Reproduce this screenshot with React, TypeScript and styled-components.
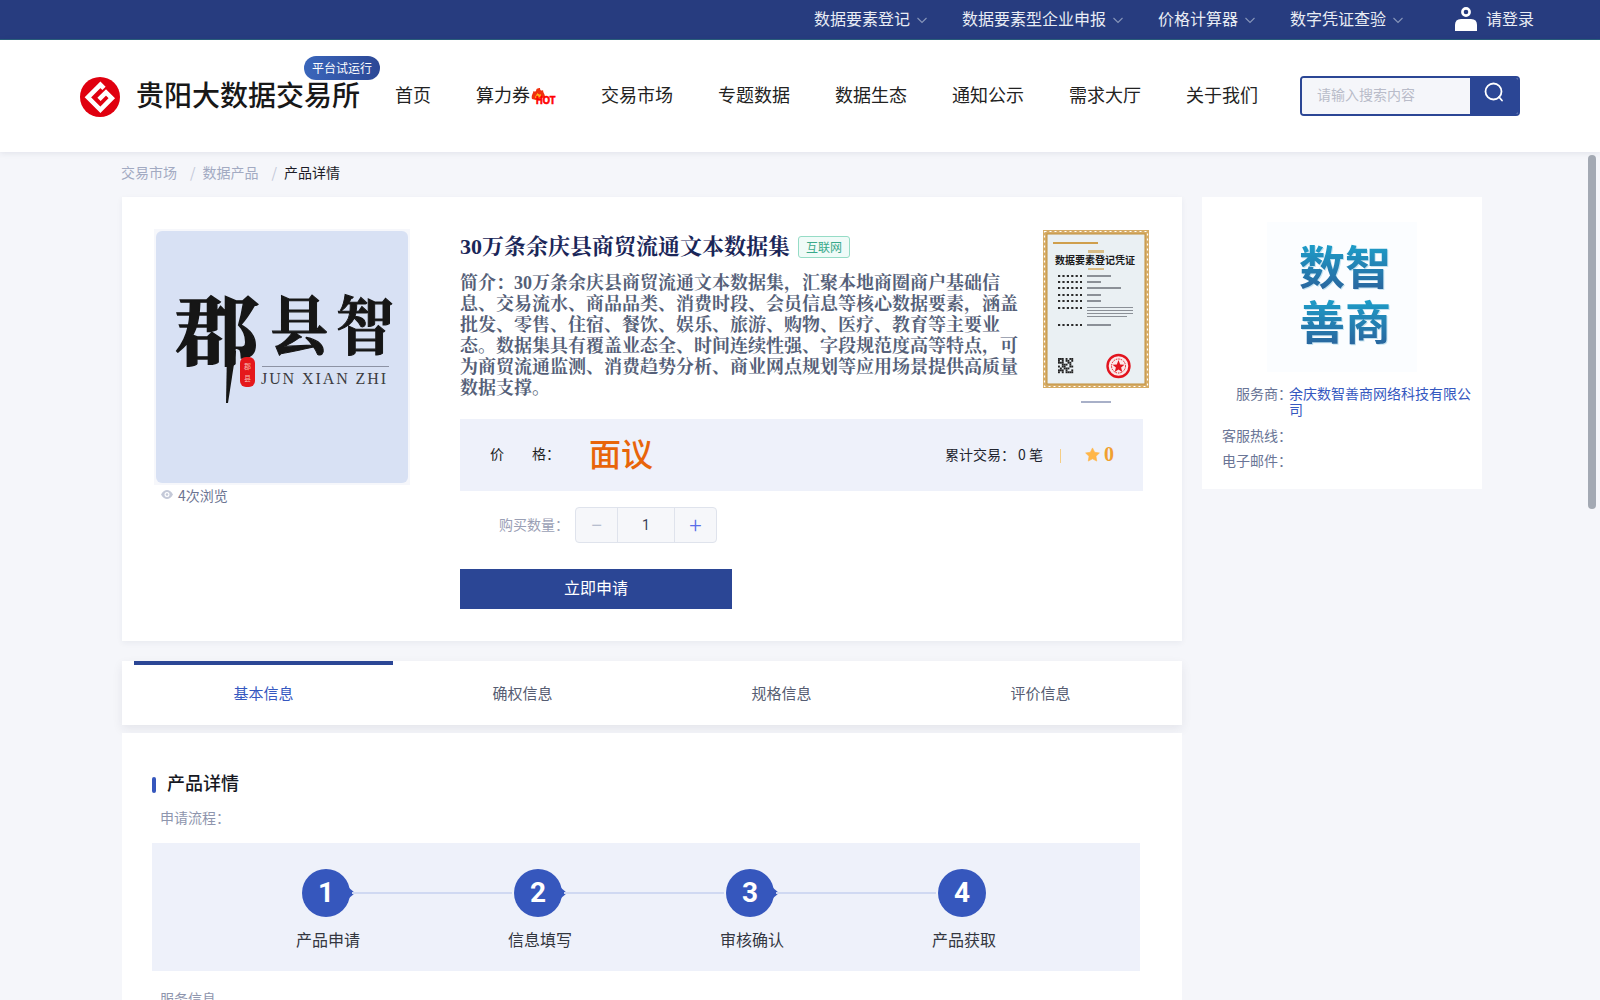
import * as React from "react"
import styled, { createGlobalStyle } from "styled-components"

const sans = `"Noto Sans CJK SC", "Liberation Sans", sans-serif`
const serif = `"Liberation Serif", "Noto Serif CJK SC", "Noto Sans CJK SC", serif`

// full width colon and comma, the page text uses these
const COLON = "\uFF1A"
const COMMA = "\uFF0C"

const GlobalStyle = createGlobalStyle`
  html, body {
    margin: 0;
    height: 1000px;
    overflow: hidden;
    background: #f5f6fa;
    font-family: ${sans};
    color: #222;
  }
  * { box-sizing: border-box; }
`

const TopBar = styled.div`
  height: 40px;
  background: #273c7f;
  border-bottom: 1px solid #2a5f7c;
  display: flex;
  align-items: center;
  justify-content: flex-end;
  padding: 0 66px 3px 0;
  color: #e9ecf4;
  font-size: 16px;
`

const TopItem = styled.div`
  display: flex;
  align-items: center;
  gap: 6px;
  margin-right: 34px;
  &:nth-child(4) { margin-right: 51px; }
  svg { margin-top: 4px; }
`

const LoginBox = styled.div`
  display: flex;
  align-items: center;
  gap: 9px;
  svg { margin-top: 2px; }
`

const Header = styled.div`
  height: 112px;
  background: #fff;
  box-shadow: 0 1px 6px rgba(40, 50, 90, 0.1);
  display: flex;
  align-items: center;
  padding: 0 80px;
  position: relative;
`

const Brand = styled.div`
  position: relative;
  display: flex;
  align-items: center;
  gap: 16px;
  margin-right: 35px;
  svg { margin-top: 2px; }
`

const BrandName = styled.div`
  font-size: 28px;
  font-weight: 500;
  color: #181818;
  white-space: nowrap;
  margin-bottom: 4px;
`

const TrialBadge = styled.div`
  position: absolute;
  left: 224px;
  top: -18px;
  width: 76px;
  height: 24px;
  border-radius: 12px;
  background: linear-gradient(90deg, #3a66bb, #2c4896);
  color: #fff;
  font-size: 12px;
  line-height: 23px;
  text-align: center;
`

const Nav = styled.div`
  display: flex;
  gap: 45px;
  margin-bottom: 4px;
  font-size: 18px;
  color: #222;
  white-space: nowrap;
`

const NavItem = styled.div`
  display: flex;
  align-items: center;
  height: 26px;
`

const SearchBox = styled.div`
  width: 220px;
  height: 40px;
  margin-left: 42px;
  border: 2px solid #2b4695;
  border-radius: 4px;
  display: flex;
  overflow: hidden;
`

const SearchInput = styled.div`
  flex: 1;
  background: #f5f6fa;
  padding-left: 15px;
  color: #b9bcc9;
  font-size: 14px;
  line-height: 33px;
`

const SearchButton = styled.div`
  width: 48px;
  background: #2b4695;
  display: flex;
  align-items: flex-start;
  justify-content: center;
  padding-top: 4px;
`

const Crumbs = styled.div`
  height: 45px;
  padding: 10px 0 0 121px;
  font-size: 14px;
  line-height: 20px;
  color: #a2aac2;
  display: flex;
`

const CrumbSep = styled.span`
  margin: 0 7px 0 13px;
  color: #c3c8d8;
`

const CrumbNow = styled.span`
  color: #1c1c28;
`

const Main = styled.div`
  display: flex;
  gap: 20px;
  padding-left: 122px;
  align-items: flex-start;
`

const LeftColumn = styled.div`
  width: 1060px;
`

const ProductCard = styled.div`
  height: 444px;
  background: #fff;
  box-shadow: 0 2px 6px rgba(40, 50, 90, 0.06);
  padding: 32px 39px 32px 32px;
  display: flex;
  gap: 50px;
`

const CoverColumn = styled.div`
  width: 256px;
  flex: none;
`

const CoverFrame = styled.div`
  width: 256px;
  height: 256px;
  border: 2px solid #f6f7fb;
  background: #f6f7fb;
`

const Views = styled.div`
  display: flex;
  align-items: center;
  gap: 5px;
  padding-left: 7px;
  height: 19px;
  font-size: 14px;
  color: #6c7492;
`

const InfoColumn = styled.div`
  flex: 1;
  min-width: 0;
`

const InfoTop = styled.div`
  display: flex;
  gap: 23px;
  height: 190px;
  margin-right: -6px;
`

const InfoText = styled.div`
  width: 560px;
  flex: none;
`

const TitleRow = styled.div`
  display: flex;
  align-items: center;
  height: 36px;
  margin-bottom: 8px;
  gap: 8px;
`

const Title = styled.h1`
  margin: 0 0 6px;
  font-family: ${serif};
  font-size: 22px;
  font-weight: 700;
  color: #1a2658;
  white-space: nowrap;
`

const Tag = styled.span`
  width: 52px;
  height: 22px;
  border: 1px solid #96dcc6;
  border-radius: 3px;
  background: #f0fbf8;
  color: #38a98a;
  font-size: 12px;
  line-height: 20px;
  text-align: center;
`

const Intro = styled.p`
  margin: 0;
  font-family: ${serif};
  font-size: 18px;
  line-height: 21px;
  font-weight: 700;
  color: #555f78;
`

const CertColumn = styled.div`
  width: 106px;
  flex: none;
  padding-top: 1px;
`

const CertDot = styled.div`
  width: 30px;
  height: 2px;
  margin: 13px auto 0;
  background: #a8b0c8;
`

const PriceBar = styled.div`
  height: 72px;
  background: #eef1fa;
  display: flex;
  align-items: center;
  padding: 0 29px 4px 30px;
  font-size: 14px;
`

const PriceLabel = styled.div`
  width: 70px;
  display: flex;
  justify-content: space-between;
  color: #222;
`

const PriceValue = styled.span`
  margin: 0 0 3px 29px;
  font-size: 32px;
  font-weight: 500;
  color: #e8650a;
`

const PriceStats = styled.div`
  margin: 2px 0 0 auto;
  display: flex;
  align-items: center;
  white-space: pre;
  color: #22242e;
`

const StatDivider = styled.span`
  width: 1px;
  height: 14px;
  margin: 3px 24px 0 17px;
  background: #f5cd84;
`

const Score = styled.span`
  display: flex;
  align-items: center;
  gap: 4px;
  font-family: ${serif};
  font-size: 20px;
  font-weight: 700;
  color: #f0a030;
`

const QuantityRow = styled.div`
  display: flex;
  align-items: center;
  margin-top: 16px;
`

const QuantityLabel = styled.span`
  width: 115px;
  padding-right: 6px;
  margin-bottom: 2px;
  text-align: right;
  font-size: 14px;
  color: #9aa0b5;
`

const Stepper = styled.div`
  width: 142px;
  height: 36px;
  border: 1px solid #dfe3ec;
  border-radius: 4px;
  background: #f6f7fa;
  display: grid;
  grid-template-columns: 41px 1fr 41px;
`

const StepCell = styled.div<{ $tone?: string; $mid?: boolean }>`
  display: flex;
  align-items: center;
  justify-content: center;
  font-family: "Roboto", sans-serif;
  font-size: ${(p) => (p.$mid ? "14px" : "22px")};
  font-weight: ${(p) => (p.$mid ? 400 : 300)};
  color: ${(p) => p.$tone || "#3a4058"};
  ${(p) => p.$mid && "border-left: 1px solid #dfe3ec; border-right: 1px solid #dfe3ec;"}
`

const ApplyButton = styled.button`
  display: block;
  width: 272px;
  height: 40px;
  margin-top: 26px;
  padding: 0 0 4px;
  border: 0;
  background: #2b4695;
  color: #fff;
  font-family: ${sans};
  font-size: 16px;
`

const Tabs = styled.div`
  height: 64px;
  margin-top: 20px;
  padding: 0 12px;
  background: #fff;
  box-shadow: 0 4px 10px rgba(40, 40, 60, 0.08);
  display: grid;
  grid-template-columns: repeat(4, 259px);
`

const Tab = styled.div<{ $active?: boolean }>`
  border-top: 4px solid ${(p) => (p.$active ? "#2b4695" : "transparent")};
  padding-top: 17px;
  text-align: center;
  font-size: 15px;
  line-height: 22px;
  color: ${(p) => (p.$active ? "#3558c0" : "#565d72")};
`

const DetailCard = styled.div`
  margin-top: 8px;
  height: 300px;
  background: #fff;
  padding: 44px 42px 0 30px;
`

const SectionHead = styled.div`
  display: flex;
  align-items: center;
  gap: 11px;
  height: 16px;
  &::before {
    content: "";
    width: 4px;
    height: 16px;
    border-radius: 2px;
    background: #3657bd;
  }
`

const SectionTitle = styled.span`
  margin-bottom: 7px;
  font-size: 18px;
  font-weight: 500;
  color: #16181f;
`

const SubHead = styled.div<{ $gap: number }>`
  margin-top: ${(p) => p.$gap}px;
  padding-left: 8px;
  font-size: 14px;
  line-height: 20px;
  color: #8e95ad;
`

const Flow = styled.div`
  height: 128px;
  margin-top: 16px;
  padding: 26px 0 0 70px;
  background: #eef1fa;
  display: grid;
  grid-template-columns: repeat(4, 212px);
`

const Step = styled.div`
  display: flex;
  flex-direction: column;
  align-items: center;
  position: relative;
  &:not(:last-child)::after {
    content: "";
    position: absolute;
    left: 130px;
    width: 160px;
    top: 23px;
    height: 2px;
    background: #d0d9f2;
  }
`

const StepCircle = styled.div<{ $arrow: boolean }>`
  position: relative;
  width: 48px;
  height: 48px;
  margin-right: 4px;
  border-radius: 50%;
  background: #3657bd;
  color: #fff;
  font-family: "Roboto", sans-serif;
  font-size: 28px;
  font-weight: 700;
  line-height: 48px;
  text-align: center;
  &::after {
    content: ${(p) => (p.$arrow ? '""' : "none")};
    position: absolute;
    right: -5px;
    top: 18px;
    border-left: 7px solid #3657bd;
    border-top: 6px solid transparent;
    border-bottom: 6px solid transparent;
  }
`

const StepLabel = styled.div`
  margin-top: 12px;
  font-size: 16px;
  line-height: 20px;
  color: #33363f;
`

const SideCard = styled.div`
  width: 280px;
  height: 292px;
  background: #fff;
  padding: 25px 10px 0 0;
`

const VendorLogo = styled.div`
  width: 150px;
  height: 150px;
  margin: 0 0 13px 65px;
  background: #fbfdff;
  display: flex;
  align-items: center;
  justify-content: center;
  padding: 0 0 10px 6px;
`

const VendorWord = styled.span`
  display: block;
  width: 92px;
  font-size: 46px;
  line-height: 55px;
  font-weight: 700;
  background: linear-gradient(180deg, #1ba6cf, #2a639c) 0 0 / 100% 55px repeat-y;
  -webkit-background-clip: text;
  background-clip: text;
  color: transparent;
  filter: drop-shadow(1px 1px 0 #c4e2f0);
`

const VendorRow = styled.div<{ $gap: number }>`
  display: grid;
  grid-template-columns: 87px 1fr;
  margin-bottom: ${(p) => p.$gap}px;
  font-size: 14px;
  line-height: 16px;
  color: #6a7596;
`

const VendorLabel = styled.span`
  margin-right: -3px;
  text-align: right;
`

const VendorValue = styled.span`
  color: #3558c0;
`

const ScrollThumb = styled.div`
  position: fixed;
  left: 1588px;
  top: 155px;
  width: 8px;
  height: 354px;
  border-radius: 4px;
  background: #a3a9b3;
`

const Chevron = () => (
  <svg width="12" height="12" viewBox="0 0 12 12" fill="none" stroke="#8796ba" strokeWidth="1.1">
    <path d="M1.5 4 L6 8.5 L10.5 4" />
  </svg>
)

const UserIcon = () => (
  <svg width="22" height="24" viewBox="0 0 22 24">
    <circle cx="11" cy="5" r="3.6" fill="none" stroke="#fff" strokeWidth="2.6" />
    <path d="M0 24 V18 Q0 12 6 12 H16 Q22 12 22 18 V24 Z" fill="#fff" />
  </svg>
)

const SearchIcon = () => (
  <svg width="20" height="20" viewBox="0 0 20 20" fill="none" stroke="#fff" strokeWidth="1.8">
    <circle cx="9.5" cy="9.5" r="8" />
    <path d="M15 15 L18 18.5" strokeLinecap="round" />
  </svg>
)

const LogoMark = () => (
  <svg width="40" height="40" viewBox="0 0 40 40">
    <circle cx="20" cy="20" r="20" fill="#e0000f" />
    <path d="M24 11.4 L20.4 7.8 L7.9 20.3 L20.4 32.8 L31.8 21.2 L26 15.4 L19 22.4" fill="none" stroke="#fff" strokeWidth="4.6" />
  </svg>
)

const HotMark = () => (
  <svg width="26" height="18" viewBox="0 0 26 18" style={{ marginTop: 6 }}>
    <path d="M2 11 C1 7 3 6 3.5 3 C5 4 6 4 6.5 1 C8 0 9 0 10 0 C10 3 12 3 13 2 C13 5 15 6 15 9 L6 12 Z" fill="#f0300f" />
    <path d="M5 10 C5 8 6.5 7 7.5 5 C8.5 6.5 10 7 11 6 L11 9 Z" fill="#ffb41e" />
    <text x="6" y="15.5" fontFamily="Liberation Sans" fontSize="10" fontWeight="700" stroke="#f00" strokeWidth="0.6" fill="#f00" textLength="19.5" lengthAdjust="spacingAndGlyphs">HOT</text>
  </svg>
)

const EyeIcon = () => (
  <svg width="12" height="9" viewBox="0 0 12 9" fill="#c4c9d8">
    <path d="M0 4.5 C2 1 4 0 6 0 C8 0 10 1 12 4.5 C10 8 8 9 6 9 C4 9 2 8 0 4.5 Z M6 2 A2.5 2.5 0 1 0 6 7 A2.5 2.5 0 1 0 6 2 Z" fillRule="evenodd" />
    <circle cx="6" cy="4.5" r="1.3" />
  </svg>
)

const StarIcon = () => (
  <svg width="15" height="15" viewBox="0 0 24 24" fill="#ffb648">
    <path d="M12 1.5 L15.4 8.4 L23 9.5 L17.5 14.9 L18.8 22.5 L12 18.9 L5.2 22.5 L6.5 14.9 L1 9.5 L8.6 8.4 Z" stroke="#ffb648" strokeWidth="1" strokeLinejoin="round" />
  </svg>
)

const CoverArt = () => (
  <svg width="252" height="252" viewBox="0 0 252 252" style={{ display: "block", borderRadius: 6 }}>
    <rect width="252" height="252" fill="#d8e1f4" />
    <g fill="#161616" fontFamily={serif} fontWeight="700" stroke="#161616">
      <text transform="translate(19 128) scale(1 .9)" fontSize="84" strokeWidth="1.5">郡</text>
      <text transform="translate(114 118) scale(1 1.1)" fontSize="58" strokeWidth="1">县</text>
      <text transform="translate(180 118) scale(1 1.1)" fontSize="58" strokeWidth="1">智</text>
    </g>
    <path d="M71 120 L70 172 L72 172 L80 120 Z" fill="#161616" />
    <rect x="84" y="126" width="15" height="30" rx="6" fill="#e5181b" />
    <g fill="#f6b9b0" fontFamily={sans} fontSize="7">
      <text x="88" y="138">郡</text>
      <text x="88" y="150">县</text>
    </g>
    <rect x="106" y="135" width="127" height="1" fill="#8d93a4" />
    <text x="105" y="153" fontFamily={serif} fontSize="16" textLength="125" fill="#3c3c40">JUN XIAN ZHI</text>
  </svg>
)

const qrCells = [
  "11101011", "10101101", "11100110", "00111010", "10110011", "01011100", "11101001", "10101111",
]

const CertArt = () => (
  <svg width="106" height="158" viewBox="0 0 106 158" style={{ display: "block" }}>
    <rect width="106" height="158" fill="#d6ac66" />
    <rect x="1.5" y="1.5" width="103" height="155" fill="none" stroke="#fff" strokeWidth="1.2" strokeDasharray="2 3" />
    <rect x="4" y="4" width="98" height="150" fill="#eaf0f3" stroke="#c0903f" strokeWidth="1" />
    <rect x="10" y="12" width="45" height="2" fill="#cf9f4d" />
    <rect x="45" y="20" width="16" height="3" fill="#d9bd86" />
    <text x="52" y="34" textAnchor="middle" fontFamily={sans} fontSize="10" fontWeight="700" fill="#1a1a1a">数据要素登记凭证</text>
    <rect x="45" y="38" width="16" height="2" fill="#d9bd86" />
    <path
      d="M15 46 H39 M15 52 H39 M15 58 H39 M15 65 H39 M15 71 H39 M15 78 H39 M15 95 H39"
      stroke="#2a2a2a"
      strokeWidth="2"
      strokeDasharray="2.2 2.2"
      fill="none"
    />
    <g fill="#8b9097">
      <rect x="44" y="45" width="24" height="2" />
      <rect x="44" y="51" width="14" height="2" />
      <rect x="44" y="57" width="34" height="2" />
      <rect x="44" y="64" width="14" height="2" />
      <rect x="44" y="70" width="14" height="2" />
      <rect x="44" y="77" width="46" height="1" />
      <rect x="44" y="80" width="46" height="1" />
      <rect x="44" y="83" width="46" height="1" />
      <rect x="44" y="86" width="40" height="1" />
      <rect x="44" y="94" width="24" height="2" />
    </g>
    <g fill="#222">
      {qrCells.flatMap((row, y) =>
        row.split("").map((c, x) =>
          c === "1" ? <rect key={`${x}-${y}`} x={15 + x * 1.9} y={128 + y * 1.9} width="1.9" height="1.9" /> : null
        )
      )}
    </g>
    <circle cx="75.5" cy="136" r="11" fill="#fbe9ea" stroke="#e2141e" strokeWidth="2.4" />
    <circle cx="75.5" cy="136" r="7" fill="none" stroke="#e2141e" strokeWidth="1" strokeDasharray="1.5 1" />
    <path d="M75.5 130 L77.2 134.6 L81.5 134.8 L78.1 137.6 L79.3 142 L75.5 139.4 L71.7 142 L72.9 137.6 L69.5 134.8 L73.8 134.6 Z" fill="#e2141e" />
  </svg>
)

const topLinks = ["数据要素登记", "数据要素型企业申报", "价格计算器", "数字凭证查验"]
const navLinks = ["交易市场", "专题数据", "数据生态", "通知公示", "需求大厅", "关于我们"]
const tabLabels = ["基本信息", "确权信息", "规格信息", "评价信息"]
const flowSteps = ["产品申请", "信息填写", "审核确认", "产品获取"]

const introText =
  `简介${COLON}30万条余庆县商贸流通文本数据集${COMMA}汇聚本地商圈商户基础信息、交易流水、商品品类、消费时段、会员信息等核心数据要素${COMMA}涵盖批发、零售、住宿、餐饮、娱乐、旅游、购物、医疗、教育等主要业态。数据集具有覆盖业态全、时间连续性强、字段规范度高等特点${COMMA}可为商贸流通监测、消费趋势分析、商业网点规划等应用场景提供高质量数据支撑。`

const App = () => {
  return (
    <>
      <GlobalStyle />
      <TopBar>
        {topLinks.map((t) => (
          <TopItem key={t}>
            {t}
            <Chevron />
          </TopItem>
        ))}
        <LoginBox>
          <UserIcon />
          请登录
        </LoginBox>
      </TopBar>
      <Header>
        <Brand>
          <LogoMark />
          <BrandName>贵阳大数据交易所</BrandName>
          <TrialBadge>平台试运行</TrialBadge>
        </Brand>
        <Nav>
          <NavItem>首页</NavItem>
          <NavItem>
            算力券
            <HotMark />
          </NavItem>
          {navLinks.map((t) => (
            <NavItem key={t}>{t}</NavItem>
          ))}
        </Nav>
        <SearchBox>
          <SearchInput>请输入搜索内容</SearchInput>
          <SearchButton>
            <SearchIcon />
          </SearchButton>
        </SearchBox>
      </Header>
      <Crumbs>
        交易市场
        <CrumbSep>/</CrumbSep>
        数据产品
        <CrumbSep>/</CrumbSep>
        <CrumbNow>产品详情</CrumbNow>
      </Crumbs>
      <Main>
        <LeftColumn>
          <ProductCard>
            <CoverColumn>
              <CoverFrame>
                <CoverArt />
              </CoverFrame>
              <Views>
                <EyeIcon />
                4次浏览
              </Views>
            </CoverColumn>
            <InfoColumn>
              <InfoTop>
                <InfoText>
                  <TitleRow>
                    <Title>30万条余庆县商贸流通文本数据集</Title>
                    <Tag>互联网</Tag>
                  </TitleRow>
                  <Intro>{introText}</Intro>
                </InfoText>
                <CertColumn>
                  <CertArt />
                  <CertDot />
                </CertColumn>
              </InfoTop>
              <PriceBar>
                <PriceLabel>
                  <span>价</span>
                  <span>{`格${COLON}`}</span>
                </PriceLabel>
                <PriceValue>面议</PriceValue>
                <PriceStats>
                  {`累计交易${COLON} 0 笔`}
                  <StatDivider />
                  <Score>
                    <StarIcon />0
                  </Score>
                </PriceStats>
              </PriceBar>
              <QuantityRow>
                <QuantityLabel>{`购买数量${COLON}`}</QuantityLabel>
                <Stepper>
                  <StepCell $tone="#a9b1c6">−</StepCell>
                  <StepCell $mid>1</StepCell>
                  <StepCell $tone="#5a6ee8">+</StepCell>
                </Stepper>
              </QuantityRow>
              <ApplyButton>立即申请</ApplyButton>
            </InfoColumn>
          </ProductCard>
          <Tabs>
            {tabLabels.map((t, i) => (
              <Tab key={t} $active={i === 0}>
                {t}
              </Tab>
            ))}
          </Tabs>
          <DetailCard>
            <SectionHead>
              <SectionTitle>产品详情</SectionTitle>
            </SectionHead>
            <SubHead $gap={14}>{`申请流程${COLON}`}</SubHead>
            <Flow>
              {flowSteps.map((t, i) => (
                <Step key={t}>
                  <StepCircle $arrow={i < flowSteps.length - 1}>{i + 1}</StepCircle>
                  <StepLabel>{t}</StepLabel>
                </Step>
              ))}
            </Flow>
            <SubHead $gap={17}>服务信息</SubHead>
          </DetailCard>
        </LeftColumn>
        <SideCard>
          <VendorLogo>
            <VendorWord>数智善商</VendorWord>
          </VendorLogo>
          <VendorRow $gap={10}>
            <VendorLabel>{`服务商${COLON}`}</VendorLabel>
            <VendorValue>余庆数智善商网络科技有限公司</VendorValue>
          </VendorRow>
          <VendorRow $gap={9}>
            <VendorLabel>{`客服热线${COLON}`}</VendorLabel>
            <span />
          </VendorRow>
          <VendorRow $gap={9}>
            <VendorLabel>{`电子邮件${COLON}`}</VendorLabel>
            <span />
          </VendorRow>
        </SideCard>
      </Main>
      <ScrollThumb />
    </>
  )
}

export default App
